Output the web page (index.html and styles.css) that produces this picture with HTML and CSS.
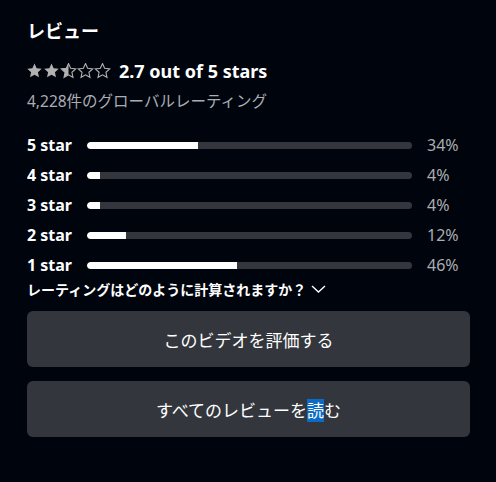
FILE: index.html
```html
<!DOCTYPE html>
<html lang="ja">
<head>
  <meta charset="UTF-8" />
  <meta name="viewport" content="width=device-width, initial-scale=1.0"/>
  <title>レビュー</title>
  <link rel="stylesheet" href="styles.css">
</head>
<body>

  <section class="reviews">
    <h2 class="reviews-title">レビュー</h2>

    <div class="rating">
      <svg class="stars" width="86" height="16" viewBox="0 0 86 16">
        <defs>
          <path id="star" d="M7.5 0.6 L9.62 5.29 L14.73 5.85 L10.92 9.31 L11.97 14.35 L7.5 11.8 L3.03 14.35 L4.08 9.31 L0.27 5.85 L5.38 5.29 Z"/>
          <clipPath id="half"><rect x="0" y="0" width="7.5" height="16"/></clipPath>
        </defs>
        <use href="#star" class="star-full" x="0"/>
        <use href="#star" class="star-full" x="17"/>
        <g transform="translate(34 0)">
          <use href="#star" class="star-empty"/>
          <use href="#star" class="star-full" clip-path="url(#half)"/>
        </g>
        <use href="#star" class="star-empty" x="51"/>
        <use href="#star" class="star-empty" x="68"/>
      </svg>
      <span class="rating-text">2.7 out of 5 stars</span>
    </div>

    <p class="rating-count">4,228件のグローバルレーティング</p>

    <div class="histogram" id="histogram"></div>

    <button class="how-link">レーティングはどのように計算されますか？
      <svg class="chevron" width="15" height="8" viewBox="0 0 15 8"><path d="M1 1 L7.5 7 L14 1" fill="none" stroke="#fff" stroke-width="1.4"/></svg>
    </button>

    <div class="actions">
      <button class="action-btn">このビデオを評価する</button>
      <button class="action-btn">すべてのレビューを<span class="selected">読</span>む</button>
    </div>
  </section>

  <script>
    const rows = [
      { label: '5 star', pct: 34 },
      { label: '4 star', pct: 4 },
      { label: '3 star', pct: 4 },
      { label: '2 star', pct: 12 },
      { label: '1 star', pct: 46 },
    ];

    const histogram = document.getElementById('histogram');

    rows.forEach(row => {
      const el = document.createElement('div');
      el.className = 'hist-row';
      el.innerHTML = `
        <span class="hist-label">${row.label}</span>
        <div class="hist-track"><div class="hist-fill" style="width: ${row.pct}%"></div></div>
        <span class="hist-pct">${row.pct}%</span>
      `;
      histogram.appendChild(el);
    });
  </script>

</body>
</html>
```

FILE: styles.css
```css
body {
  margin: 0;
  background: #00050d;
  color: #fff;
  font-family: "Noto Sans", "Noto Sans CJK JP", sans-serif;
}

.reviews {
  padding: 18px 26px 30px 27px;
}

.reviews-title {
  margin: 0;
  font-size: 18px;
  line-height: 26px;
  font-weight: 700;
}

.rating {
  display: flex;
  align-items: center;
  gap: 6px;
  height: 24px;
  margin-top: 15px;
}

.stars {
  display: block;
}

.star-full {
  fill: #b1b1b1;
}

.star-empty {
  fill: none;
  stroke: #b1b1b1;
  stroke-width: 1.1;
}

.rating-text {
  font-size: 18px;
  font-weight: 700;
}

.rating-count {
  margin: 7px 0 0;
  font-size: 15.5px;
  line-height: 22px;
  color: #aaadb2;
}

.histogram {
  display: flex;
  flex-direction: column;
  gap: 6px;
  margin-top: 21px;
}

.hist-row {
  display: grid;
  grid-template-columns: 45px 325px auto;
  column-gap: 15px;
  align-items: center;
  height: 24px;
}

.hist-label {
  font-size: 16px;
  font-weight: 700;
  white-space: nowrap;
}

.hist-track {
  height: 7px;
  border-radius: 4px;
  background: #33373d;
  overflow: hidden;
}

.hist-fill {
  height: 100%;
  background: #fff;
  border-radius: 4px 0 0 4px;
}

.hist-pct {
  font-size: 16px;
  color: #aaadb2;
}

.how-link {
  display: flex;
  align-items: center;
  gap: 5px;
  margin-top: 1px;
  padding: 0;
  height: 22px;
  background: none;
  border: none;
  color: #fff;
  font-family: inherit;
  font-size: 14px;
  font-weight: 700;
  cursor: pointer;
}

.actions {
  display: flex;
  flex-direction: column;
  gap: 14px;
  margin-top: 11px;
}

.action-btn {
  height: 56px;
  border: none;
  border-radius: 6px;
  background: #33373d;
  color: #fff;
  font-family: inherit;
  font-size: 17px;
  cursor: pointer;
}

.selected {
  background: #0c6bc4;
}
```
